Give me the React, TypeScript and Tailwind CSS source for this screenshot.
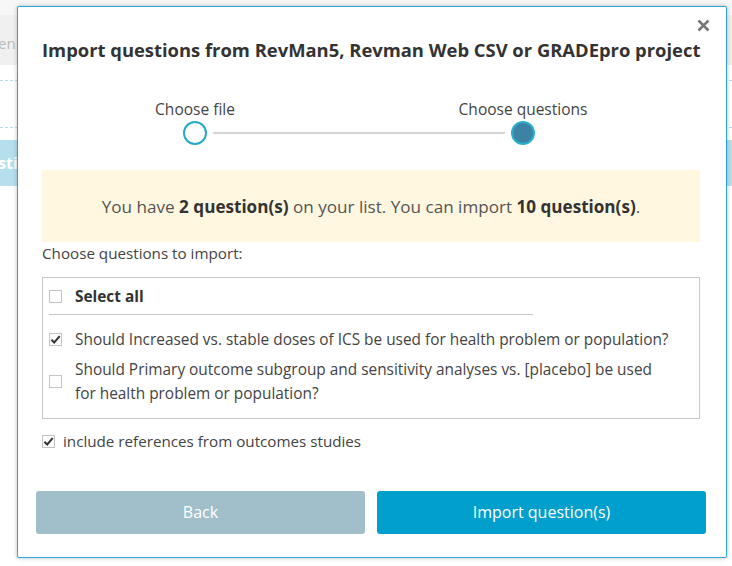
import React from "react";

type Question = {
  id: string;
  text: string[];
  checked: boolean;
};

const questions: Question[] = [
  {
    id: "q1",
    text: ["Should Increased vs. stable doses of ICS be used for health problem or population?"],
    checked: true,
  },
  {
    id: "q2",
    text: [
      "Should Primary outcome subgroup and sensitivity analyses vs. [placebo] be used",
      "for health problem or population?",
    ],
    checked: false,
  },
];

function Checkbox({ checked }: { checked: boolean }) {
  return (
    <span className="flex h-[13px] w-[13px] shrink-0 items-center justify-center border border-[#c4c4c4] bg-white">
      {checked ? (
        <svg viewBox="0 0 12 12" className="h-[11px] w-[11px]">
          <path d="M1.5 6.2 L4.6 9.2 L10.6 2.4" fill="none" stroke="#333" strokeWidth="2.2" />
        </svg>
      ) : null}
    </span>
  );
}

function Backdrop() {
  return (
    <div className="h-[566px] w-full bg-white">
      <div className="h-[15px] bg-[#f7f7f7]" />
      <div className="flex h-[50px] items-center bg-[#f0f0f0] pt-[6px] text-[15px] text-[#bbb]">
        <span className="-ml-[2px]">en</span>
      </div>
      <div className="h-[15px]" />
      <div className="border-t border-dashed border-[#b9dcec]" />
      <div className="h-[46px]" />
      <div className="border-t border-dashed border-[#b9dcec]" />
      <div className="h-[12px]" />
      <div className="flex h-[46px] items-center bg-[#b6dfee] text-[16px] font-bold text-white">
        <span className="-ml-[2px]">sti</span>
      </div>
    </div>
  );
}

export default function App() {
  return (
    <div className="relative h-[566px] w-[732px] overflow-hidden font-['Open_Sans',sans-serif]">
      <Backdrop />

      <div className="absolute left-[17px] top-[6px] h-[552px] w-[710px] rounded-[2px] border border-[#2aa6de] bg-white shadow-[0_0_4px_rgba(0,0,0,0.25)]">
        <button className="absolute left-[679px] top-[12px]">
          <svg viewBox="0 0 13 13" className="h-[13px] w-[13px]">
            <path d="M1.5 1.5 L11.5 11.5 M11.5 1.5 L1.5 11.5" stroke="#777" strokeWidth="2.6" />
          </svg>
        </button>

        <div className="pl-[24px] pr-[26px] pt-[29px]">
          <h1 className="whitespace-nowrap text-[18.4px] font-bold text-[#333]">
            Import questions from RevMan5, Revman Web CSV or GRADEpro project
          </h1>

          <div className="mt-[35px] flex pl-[93px] text-[15.5px] text-[#444]">
            <div className="flex w-[120px] flex-col items-center">
              <span className="leading-[20px]">Choose file</span>
              <span className="mt-[2px] h-[24px] w-[24px] rounded-full border-[2.5px] border-[#26a9c8] bg-white" />
            </div>
            <div className="relative w-[188px]">
              <div className="absolute -left-[42px] -right-[62px] bottom-[11px] h-[2px] bg-[#d3d3d8]" />
            </div>
            <div className="flex w-[160px] flex-col items-center">
              <span className="leading-[20px]">Choose questions</span>
              <span className="mt-[2px] h-[24px] w-[24px] rounded-full border-[2.5px] border-[#2bb0cc] bg-[#3b82a5]" />
            </div>
          </div>

          <div className="mt-[25px] flex h-[72px] items-center justify-center bg-[#fff7df] text-[17.1px] text-[#555]">
            <span className="pt-[2px]">
              You have <b className="text-[#333]">2 question(s)</b> on your list. You can import{" "}
              <b className="text-[#333]">10 question(s)</b>.
            </span>
          </div>

          <p className="-mt-[1px] text-[15.2px] leading-[24px] text-[#444]">Choose questions to import:</p>

          <div className="mt-[12px] border border-[#c8c8c8] px-[6px] pb-[12px] pt-[7px] text-[15.4px] text-[#444]">
            <div className="mr-[160px] flex items-center gap-[13px] border-b border-[#c8c8c8] pb-[6px]">
              <Checkbox checked={false} />
              <span className="font-bold text-[#333]">Select all</span>
            </div>
            <div className="mt-[13px] flex flex-col gap-[6px]">
              {questions.map((q) => (
                <div key={q.id} className="flex items-center gap-[13px]">
                  <Checkbox checked={q.checked} />
                  <div className="leading-[24px]">
                    {q.text.map((line) => (
                      <div key={line}>{line}</div>
                    ))}
                  </div>
                </div>
              ))}
            </div>
          </div>

          <div className="mt-[11px] flex items-center gap-[8px] text-[15.2px] text-[#444]">
            <Checkbox checked />
            <span>include references from outcomes studies</span>
          </div>
        </div>

        <div className="mt-[38px] flex gap-[12px] pl-[18px] pr-[20px]">
          <button className="h-[43px] flex-1 rounded-[3px] bg-[#a0bfcb] text-[16px] text-white">Back</button>
          <button className="h-[43px] flex-1 rounded-[3px] bg-[#009fcc] text-[16px] text-white">
            Import question(s)
          </button>
        </div>
      </div>
    </div>
  );
}
